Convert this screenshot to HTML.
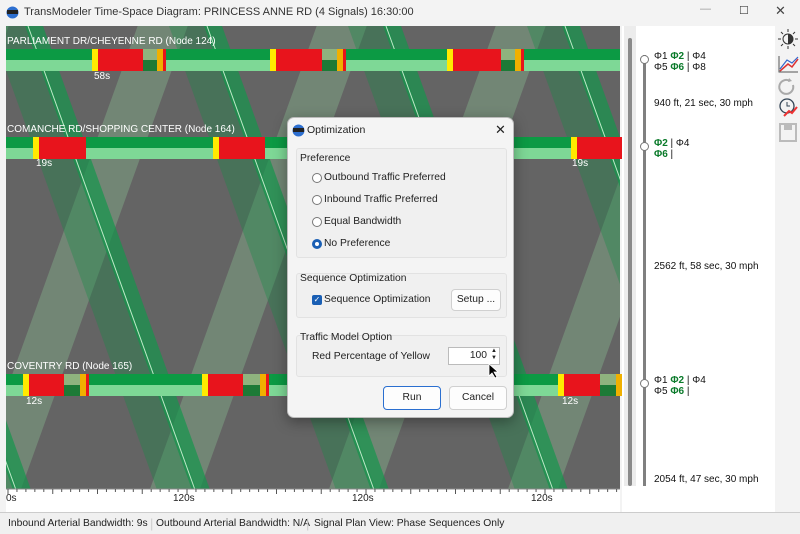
<!DOCTYPE html>
<html><head><meta charset="utf-8"><style>
*{box-sizing:border-box;margin:0;padding:0}
body{width:800px;height:534px;overflow:hidden;background:#f3f3f3;font-family:"Liberation Sans",sans-serif;font-size:11px;color:#111;position:relative}
.abs{position:absolute}
.title{left:0;top:0;width:800px;height:25px;background:#f3f3f3}
.title span{position:absolute;left:24px;top:6px;font-size:11px;color:#333}
.lbl{color:#fff;font-size:10px;position:absolute}
.rp{left:622px;top:26px;width:153px;height:486px;background:#fff}
.ph{position:absolute;left:654px;font-size:10px;line-height:11px;color:#111}
.g{color:#0a7a2a;font-weight:bold}
.status{left:0;top:512px;width:800px;height:22px;background:#f0f0f0;border-top:1px solid #ccc;font-size:10.3px;color:#222}
.status span{position:absolute;top:5px}
.dlg{left:287px;top:117px;width:227px;height:301px;background:#f4f4f4;border:1px solid #bbb;border-radius:7px;box-shadow:0 4px 14px rgba(0,0,0,.35);font-size:10.3px;color:#222}
.grp{position:absolute;left:8px;width:211px;border:1px solid #e2e2e2;background:#f0f0f0;border-radius:3px}
.rad{position:absolute;left:24px;width:10px;height:10px;border:1px solid #777;border-radius:50%;background:#fff}
.btn{position:absolute;background:#fdfdfd;border:1px solid #d0d0d0;border-radius:4px;text-align:center}
</style></head><body>
<div class="abs title">
<svg class="abs" style="left:6px;top:6px" width="13" height="13"><circle cx="6.5" cy="6.5" r="6" fill="#2d6fd0"/><rect x="1" y="4" width="11" height="4" fill="#222"/></svg>
<span>TransModeler Time-Space Diagram: PRINCESS ANNE RD (4 Signals) 16:30:00</span>
<span style="left:700px;top:3px;color:#999">—</span>
<span style="left:739px;top:4px;color:#444">☐</span>
<span style="left:775px;top:3px;font-size:13px;color:#444">✕</span>
</div>
<svg class="abs" style="left:0;top:25px" width="622" height="487" id="dg">
<rect x="0" y="0" width="622" height="487" fill="#f3f3f3"/>
<rect x="6" y="1" width="614" height="463" fill="#646464"/>
<g id="bands"></g>
<g id="rows"></g>
<rect x="6" y="464" width="614" height="23" fill="#fff"/>
<line x1="6" y1="464" x2="620" y2="464" stroke="#888"/>
<g id="ticks"></g>
<text x="6" y="476" font-size="10" fill="#222" font-family="Liberation Sans">0s</text>
<text x="173" y="476" font-size="10" fill="#222" font-family="Liberation Sans">120s</text>
<text x="352" y="476" font-size="10" fill="#222" font-family="Liberation Sans">120s</text>
<text x="531" y="476" font-size="10" fill="#222" font-family="Liberation Sans">120s</text>
</svg>
<div class="lbl" style="left:7px;top:36px">PARLIAMENT DR/CHEYENNE RD (Node 124)</div>
<div class="lbl" style="left:94px;top:71px">58s</div>
<div class="lbl" style="left:7px;top:124px">COMANCHE RD/SHOPPING CENTER (Node 164)</div>
<div class="lbl" style="left:36px;top:158px">19s</div>
<div class="lbl" style="left:572px;top:158px">19s</div>
<div class="lbl" style="left:7px;top:361px">COVENTRY RD (Node 165)</div>
<div class="lbl" style="left:26px;top:396px">12s</div>
<div class="lbl" style="left:562px;top:396px">12s</div>
<div class="abs rp"></div>
<div class="abs" style="left:624px;top:26px;width:12px;height:460px;background:#ececec"></div>
<div class="abs" style="left:628px;top:38px;width:4px;height:448px;background:#8a8a8a;border-radius:2px"></div>
<div class="abs" style="left:643px;top:55px;width:3px;height:431px;background:#808080"></div>
<div class="abs" style="left:640px;top:55px;width:9px;height:9px;border:1.5px solid #777;border-radius:50%;background:#fff"></div>
<div class="abs" style="left:640px;top:142px;width:9px;height:9px;border:1.5px solid #777;border-radius:50%;background:#fff"></div>
<div class="abs" style="left:640px;top:379px;width:9px;height:9px;border:1.5px solid #777;border-radius:50%;background:#fff"></div>
<div class="ph" style="top:51px">Φ1 <span class="g">Φ2</span> | Φ4<br>Φ5 <span class="g">Φ6</span> | Φ8</div>
<div class="ph" style="top:98px">940 ft, 21 sec, 30 mph</div>
<div class="ph" style="top:138px"><span class="g">Φ2</span> | Φ4<br><span class="g">Φ6</span> |</div>
<div class="ph" style="top:261px">2562 ft, 58 sec, 30 mph</div>
<div class="ph" style="top:375px">Φ1 <span class="g">Φ2</span> | Φ4<br>Φ5 <span class="g">Φ6</span> |</div>
<div class="ph" style="top:474px">2054 ft, 47 sec, 30 mph</div>
<svg class="abs" style="left:776px;top:28px" width="24" height="120">
<circle cx="12" cy="11" r="5" fill="none" stroke="#333"/><path d="M12 6a5 5 0 0 1 0 10z" fill="#333"/>
<g stroke="#333"><line x1="12" y1="1" x2="12" y2="4"/><line x1="12" y1="18" x2="12" y2="21"/><line x1="2" y1="11" x2="5" y2="11"/><line x1="19" y1="11" x2="22" y2="11"/><line x1="5" y1="4" x2="7" y2="6"/><line x1="17" y1="16" x2="19" y2="18"/><line x1="19" y1="4" x2="17" y2="6"/><line x1="5" y1="18" x2="7" y2="16"/></g>
<path d="M3 28v16h19" fill="none" stroke="#555"/><path d="M4 43l8-7 4 3 6-8" fill="none" stroke="#d33" stroke-width="1.5"/><path d="M4 41l7-9 5 3 6-6" fill="none" stroke="#36c" stroke-width="1.2"/>
<path d="M17 57a7 7 0 1 1-3-4" fill="none" stroke="#aaa" stroke-width="2"/><path d="M13 50l3 3-4 1z" fill="#aaa"/>
<circle cx="11" cy="78" r="7" fill="none" stroke="#345" stroke-width="1.3"/><path d="M11 74v4h3" stroke="#345" fill="none"/><path d="M8 88l5-5 3 2 5-6" stroke="#e33" stroke-width="2" fill="none"/>
<rect x="4" y="96" width="16" height="17" fill="none" stroke="#bbb" stroke-width="2"/><rect x="8" y="97" width="8" height="5" fill="#bbb"/>
</svg>
<div class="abs status">
<span style="left:8px">Inbound Arterial Bandwidth: 9s</span>
<span style="left:150px;top:3px;color:#ccc;font-size:13px">|</span>
<span style="left:156px">Outbound Arterial Bandwidth: N/A</span>
<span style="left:306px;top:3px;color:#ccc;font-size:13px">|</span>
<span style="left:314px">Signal Plan View: Phase Sequences Only</span>
</div>
<div class="abs dlg">
<svg class="abs" style="left:4px;top:6px" width="13" height="13"><circle cx="6.5" cy="6.5" r="6" fill="#2d6fd0"/><rect x="1" y="4" width="11" height="4" fill="#222"/></svg>
<span class="abs" style="left:19px;top:6px;font-size:10.5px">Optimization</span>
<span class="abs" style="left:207px;top:4px;font-size:13px">✕</span>
<div class="grp" style="top:30px;height:110px"></div>
<span class="abs" style="left:12px;top:35px">Preference</span>
<div class="rad" style="top:55px"></div><span class="abs" style="left:36px;top:54px">Outbound Traffic Preferred</span>
<div class="rad" style="top:77px"></div><span class="abs" style="left:36px;top:76px">Inbound Traffic Preferred</span>
<div class="rad" style="top:99px"></div><span class="abs" style="left:36px;top:98px">Equal Bandwidth</span>
<div class="rad" style="top:121px;border:3px solid #1a5fb4"></div><span class="abs" style="left:36px;top:120px">No Preference</span>
<div class="grp" style="top:155px;height:45px"></div>
<span class="abs" style="left:12px;top:155px">Sequence Optimization</span>
<div class="abs" style="left:24px;top:177px;width:10px;height:10px;background:#1a5fb4;border-radius:2px;color:#fff;font-size:8px;line-height:10px;text-align:center">✓</div>
<span class="abs" style="left:36px;top:176px">Sequence Optimization</span>
<div class="btn" style="left:163px;top:171px;width:50px;height:22px;line-height:20px">Setup ...</div>
<div class="grp" style="top:217px;height:42px"></div>
<span class="abs" style="left:12px;top:214px">Traffic Model Option</span>
<span class="abs" style="left:24px;top:233px">Red Percentage of Yellow</span>
<div class="abs" style="left:160px;top:229px;width:52px;height:18px;background:#fff;border:1px solid #bbb;text-align:right;padding-right:12px;line-height:16px">100</div>
<span class="abs" style="left:203px;top:230px;font-size:6px;line-height:7px">▲<br>▼</span>
<svg class="abs" style="left:200px;top:245px" width="12" height="16"><path d="M1 1v12l3-3 3 5 2-1-3-5h4z" fill="#000" stroke="#fff" stroke-width=".8"/></svg>
<div class="btn" style="left:95px;top:268px;width:58px;height:24px;line-height:22px;border-color:#2a6fd0">Run</div>
<div class="btn" style="left:161px;top:268px;width:58px;height:24px;line-height:22px">Cancel</div>
</div>
<script>
var ns="http://www.w3.org/2000/svg";
function el(p,t,a){var e=document.createElementNS(ns,t);for(var k in a)e.setAttribute(k,a[k]);p.appendChild(e);return e;}
var b=document.getElementById("bands"),r=document.getElementById("rows"),tk=document.getElementById("ticks");
var s=0.36,T=179,y0=1,y1=464,H=y1-y0;
for(var k=-3;k<5;k++){
 var o=k*T;
 var x=150+o; el(b,"polygon",{points:(x)+","+y1+" "+(x+50)+","+y1+" "+(x+50+H*s)+","+y0+" "+(x+H*s)+","+y0,fill:"rgba(150,215,160,0.3)"});
 x=-10+o; el(b,"polygon",{points:x+","+y0+" "+(x+40)+","+y0+" "+(x+40+H*s)+","+y1+" "+(x+H*s)+","+y1,fill:"rgba(20,140,70,0.35)"});
 x=25+o; el(b,"polygon",{points:x+","+y0+" "+(x+18)+","+y0+" "+(x+18+H*s)+","+y1+" "+(x+H*s)+","+y1,fill:"rgba(20,150,75,0.7)"});
 el(b,"line",{x1:x+3,y1:y0,x2:x+3+H*s,y2:y1,stroke:"#bfe8c8","stroke-width":1});
}
el(b,"rect",{x:0,y:0,width:6,height:487,fill:"#f3f3f3"});
el(b,"rect",{x:620,y:0,width:2,height:487,fill:"#f3f3f3"});
function row(y,segs){
 el(r,"rect",{x:6,y:y,width:614,height:11,fill:"#0c9a44"});
 el(r,"rect",{x:6,y:y+11,width:614,height:11,fill:"#7ed896"});
 segs.forEach(function(q){
  el(r,"rect",{x:q[0],y:y,width:6,height:22,fill:"#ffea00"});
  el(r,"rect",{x:q[0]+6,y:y,width:q[1],height:22,fill:"#e8141c"});
  if(q[2]){var hx=q[0]+6+q[1];
   el(r,"rect",{x:hx,y:y,width:q[2],height:11,fill:"#8fb37e"});
   el(r,"rect",{x:hx,y:y+11,width:q[2],height:11,fill:"#1d7a36"});
   el(r,"rect",{x:hx+q[2]-8,y:y,width:6,height:22,fill:"#f0b000"});
   el(r,"rect",{x:hx+q[2]-2,y:y,width:3,height:22,fill:"#e8141c"});}
 });
}
row(24,[[92,45,22],[270,46,23],[447,48,22]]);
row(112,[[33,47,0],[213,46,0],[571,45,0]]);
row(349,[[23,35,24],[202,35,25],[558,36,24]]);
for(var i=0;i<70;i++){var xx=8+i*8.95;el(tk,"line",{x1:xx,y1:464,x2:xx,y2:i%5==0?469:467,stroke:"#555"});}
</script>
</body></html>
